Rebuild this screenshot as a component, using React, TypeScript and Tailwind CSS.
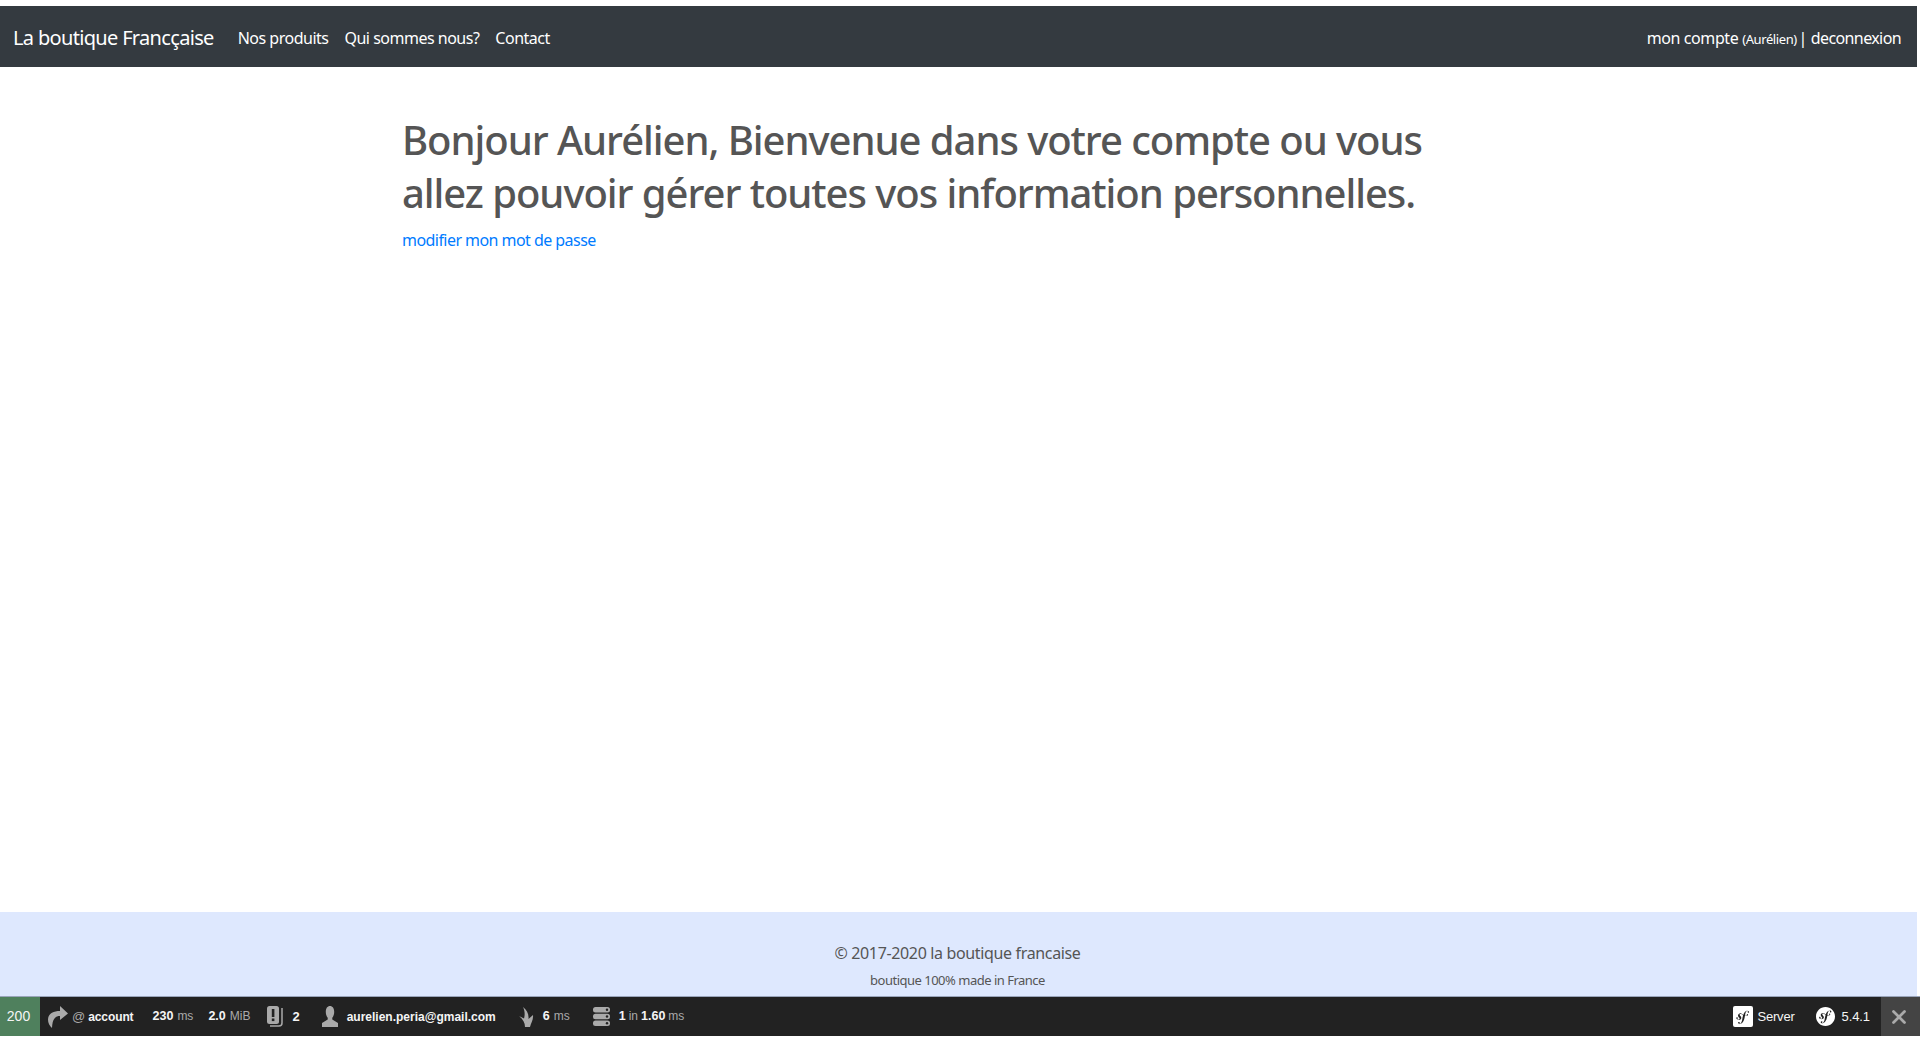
import { X } from "lucide-react";
import { SiSymfony } from "react-icons/si";

const navLinks = ["Nos produits", "Qui sommes nous?", "Contact"];

function Metric({ value, unit }: { value: string; unit?: string }) {
    return (
        <span className="flex items-baseline gap-[4px] text-[12.5px] font-bold text-[#f5f5f5]">
            {value}
            {unit && <span className="text-[12px] font-normal text-[#aaaaaa]">{unit}</span>}
        </span>
    );
}

export default function App() {
    return (
        <div className="flex h-[1040px] flex-col overflow-hidden bg-white font-['Noto_Sans','Open_Sans',sans-serif] text-[#555555]">
            <div className="h-[6px] shrink-0" />
            <nav className="mr-[3px] flex h-[61px] shrink-0 items-center bg-[#343a40] pl-[13px] pr-[16px] pt-[2px] text-[16px] tracking-[-0.5px] text-white">
                <a className="mr-[24px] text-[20px] tracking-[-0.67px]">La boutique Francçaise</a>
                <div className="flex gap-[16px]">
                    {navLinks.map((link) => (
                        <a key={link}>{link}</a>
                    ))}
                </div>
                <div className="ml-auto tracking-[-0.4px]">
                    mon compte <small className="text-[13px]">(Aurélien)</small>
                    <span className="ml-[-2px]"> | </span>
                    <span className="tracking-[-0.6px]">deconnexion</span>
                </div>
            </nav>

            <main className="mr-[4px] flex-1">
                <div className="mx-auto w-[1140px] pl-[14px] pr-[40px] pt-[46px]">
                    <h1 className="text-[40px] font-medium leading-[53px] tracking-[-1.05px]">
                        Bonjour Aurélien, Bienvenue dans votre compte ou vous allez pouvoir gérer toutes vos information personnelles.
                    </h1>
                    <a className="mt-[9px] block text-[16px] tracking-[-0.55px] text-[#007bff]">modifier mon mot de passe</a>
                </div>
            </main>

            <footer className="mr-[3px] flex h-[84px] shrink-0 flex-col items-center bg-[#dee8fe] pr-[2px] pt-[27px]">
                <p className="text-[16px] leading-[28px] tracking-[-0.35px]">© 2017-2020 la boutique francaise</p>
                <small className="mt-[4px] text-[13px] tracking-[-0.5px]">boutique 100% made in France</small>
            </footer>

            <div className="flex h-[40px] shrink-0 items-center border-t border-[#9aa5bb] bg-[#222222] font-['Liberation_Sans',sans-serif] text-[#f5f5f5]">
                <div className="flex h-full w-[40px] items-center justify-center bg-[#4f805d] pr-[3px] text-[14px]">200</div>
                <div className="ml-[8px] flex items-center">
                    <svg viewBox="0 0 20 22" className="h-[22px] w-[20px]">
                        <path d="M12 0l8 7.500-8 6.500v-4c-5 0-7.500 3-8 12-2.500-2-4-5-4-8.500C0 8 5 5 12 5z" fill="#aaaaaa" />
                    </svg>
                    <span className="ml-[4px] text-[13px] text-[#aaaaaa]">@</span>
                    <span className="ml-[3px] text-[12px] font-bold tracking-[-0.1px]">account</span>
                </div>
                <div className="ml-[19px]"><Metric value="230" unit="ms" /></div>
                <div className="ml-[15px]"><Metric value="2.0" unit="MiB" /></div>
                <div className="ml-[17px] flex items-center gap-[8px]">
                    <svg viewBox="0 0 17 21" className="h-[21px] w-[17px]">
                        <rect x="0" y="0" width="12" height="18" rx="2.500" fill="#aaaaaa" />
                        <rect x="4.800" y="3" width="2.600" height="8" fill="#222222" />
                        <rect x="4.800" y="12.500" width="2.600" height="2.600" fill="#222222" />
                        <path d="M15 2v15c0 2-1 3-3 3H3" stroke="#aaaaaa" strokeWidth="1.500" fill="none" />
                    </svg>
                    <span className="text-[13px] font-bold">2</span>
                </div>
                <div className="ml-[22px] flex items-center gap-[9px]">
                    <svg viewBox="0 0 19 21" className="h-[21px] w-[16px]" preserveAspectRatio="none">
                        <path d="M9.500 0c3 0 5 2.300 5 6 0 2.500-1 4.500-2.300 5.700V13.500L19 17v4H0v-4l6.800-3.500v-1.800C5.500 10.500 4.500 8.500 4.500 6c0-3.700 2-6 5-6z" fill="#aaaaaa" />
                    </svg>
                    <span className="text-[12px] font-bold">aurelien.peria@gmail.com</span>
                </div>
                <div className="ml-[23px] flex items-center gap-[9px]">
                    <svg viewBox="0 0 15 20" className="h-[20px] w-[15px]">
                        <path d="M4 0c4 3 6 7 5.500 12L14 8c.5 5-2 8-3 12H6c0-4-2-8-6-11l5 2.500C6 8 6 4 4 0z" fill="#aaaaaa" />
                    </svg>
                    <Metric value="6" unit="ms" />
                </div>
                <div className="ml-[23px] flex items-center gap-[9px]">
                    <svg viewBox="0 0 17 19" className="h-[19px] w-[17px]">
                        <rect x="0" y="0" width="17" height="5.500" rx="2.500" fill="#aaaaaa" />
                        <rect x="0" y="6.700" width="17" height="5.500" rx="2.500" fill="#aaaaaa" />
                        <rect x="0" y="13.500" width="17" height="5.500" rx="2.500" fill="#aaaaaa" />
                        <circle cx="14" cy="2.700" r="1.200" fill="#222222" />
                        <circle cx="14" cy="9.500" r="1.200" fill="#222222" />
                        <circle cx="14" cy="16.200" r="1.200" fill="#222222" />
                    </svg>
                    <span className="flex items-baseline gap-[3px] text-[12.5px] font-bold">
                        1 <span className="text-[12px] font-normal text-[#aaaaaa]">in</span> 1.60{" "}
                        <span className="text-[12px] font-normal text-[#aaaaaa]">ms</span>
                    </span>
                </div>

                <div className="ml-auto flex items-center gap-[4px]">
                    <span className="grid h-[21px] w-[20px] place-items-center rounded-[2px] bg-white">
                        <span className="h-[16px] w-[16px] rounded-full bg-[#222222] [grid-area:1/1]" />
                        <SiSymfony size={20} className="text-white [grid-area:1/1]" />
                    </span>
                    <span className="text-[13px] tracking-[-0.2px]">Server</span>
                </div>
                <div className="ml-[21px] flex items-center gap-[7px]">
                    <SiSymfony size={19} className="text-white" />
                    <span className="text-[13px] tracking-[-0.1px]">5.4.1</span>
                </div>
                <div className="ml-[11px] flex h-full w-[39px] items-center justify-center bg-[#444444] pr-[3px]">
                    <X size={22} strokeWidth={3} className="text-[#aaaaaa]" />
                </div>
            </div>
            <div className="h-[4px] shrink-0" />
        </div>
    );
}
